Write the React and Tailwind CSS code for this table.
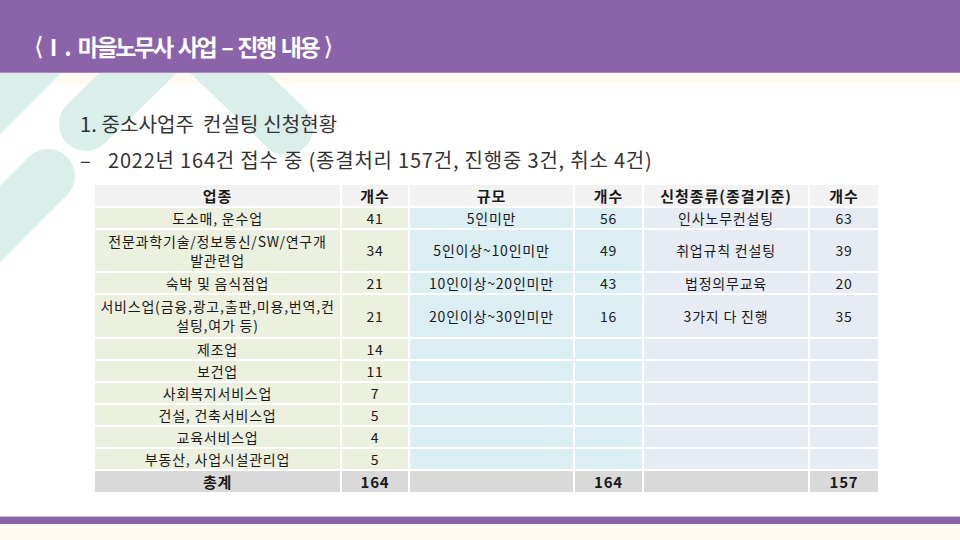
// Slide: 마을노무사 사업 - 진행 내용

const KR = { fontFamily: '"Noto Sans CJK KR", "Noto Sans", sans-serif' };

const rows = [
  { biz: "도소매, 운수업", n1: "41", size: "5인미만", n2: "56", kind: "인사노무컨설팅", n3: "63" },
  { biz: ["전문과학기술/정보통신/SW/연구개", "발관련업"], n1: "34", size: "5인이상~10인미만", n2: "49", kind: "취업규칙 컨설팅", n3: "39" },
  { biz: "숙박 및 음식점업", n1: "21", size: "10인이상~20인미만", n2: "43", kind: "법정의무교육", n3: "20" },
  { biz: ["서비스업(금융,광고,출판,미용,번역,컨", "설팅,여가 등)"], n1: "21", size: "20인이상~30인미만", n2: "16", kind: "3가지 다 진행", n3: "35" },
  { biz: "제조업", n1: "14" },
  { biz: "보건업", n1: "11" },
  { biz: "사회복지서비스업", n1: "7" },
  { biz: "건설, 건축서비스업", n1: "5" },
  { biz: "교육서비스업", n1: "4" },
  { biz: "부동산, 사업시설관리업", n1: "5" },
];

const titleWords = ["마을노무사", "사업", "–", "진행", "내용"];

const Cell = ({ className = "", children }) => (
  <div className={`flex flex-col items-center justify-center text-center whitespace-nowrap leading-[19px] ${className}`}>
    {children}
  </div>
);

const Decoration = () => (
  <svg className="absolute left-0 top-0 pointer-events-none" width="960" height="540">
    <g stroke="#DAEFEA" strokeWidth="54" strokeLinecap="round" fill="none">
      <line x1="66" y1="30" x2="-40" y2="136" />
      <line x1="172" y1="40" x2="86" y2="124" />
      <line x1="195" y1="40" x2="286" y2="128" />
      <line x1="48" y1="176" x2="-60" y2="284" />
    </g>
  </svg>
);

export default function App() {
  return (
    <div className="relative w-[960px] h-[540px] overflow-hidden bg-white flex flex-col" style={KR}>
      <div className="h-[84px] bg-[#FFFBF0]" />
      <Decoration />
      <div className="absolute left-0 top-0 w-full h-[73px] bg-[#8B63A9] border-b border-[#A68BC0] flex items-center pt-[21px] pl-[34px] z-10">
        <h1 className="flex items-center text-white text-[23px] font-bold leading-none">
          <span className="font-['DejaVu_Sans'] font-normal text-[25px] mr-[6px]">⟨</span>
          <span className="mr-[7px]">I</span>
          <span className="mr-[6px]">.</span>
          <span className="flex gap-[6px]">
            {titleWords.map((w) => (
              <span key={w} className="tracking-[-2.4px]">{w}</span>
            ))}
          </span>
          <span className="font-['DejaVu_Sans'] font-normal text-[25px] ml-[5px]">⟩</span>
        </h1>
      </div>

      <div className="relative z-10 flex flex-col">
        <div className="pl-[80px] mt-[26px] text-[20px] text-[#333] leading-[28px] tracking-[0.1px]">
          1. 중소사업주&nbsp; 컨설팅 신청현황
        </div>
        <div className="pl-[80px] mt-[8px] flex text-[20px] text-[#333] leading-[28px] tracking-[0.8px]">
          <span className="w-[28px]">–</span>
          <span>2022년 164건 접수 중 (종결처리 157건, 진행중 3건, 취소 4건)</span>
        </div>

        <div className="ml-[95px] mt-[11px] grid grid-cols-[245px_66px_163px_67px_164px_68px] grid-rows-[21px_20px_41px_20px_42px_20px_20px_20px_20px_20px_20px_21px] gap-[2px] w-[783px] text-[14px] text-[#1a1a1a] tracking-[0.8px]">
          <Cell className="bg-[#F2F2F2] font-bold text-[15px] tracking-[1px]">업종</Cell>
          <Cell className="bg-[#F2F2F2] font-bold text-[15px] tracking-[1px]">개수</Cell>
          <Cell className="bg-[#F2F2F2] font-bold text-[15px] tracking-[1px]">규모</Cell>
          <Cell className="bg-[#F2F2F2] font-bold text-[15px] tracking-[1px]">개수</Cell>
          <Cell className="bg-[#F2F2F2] font-bold text-[15px] tracking-[1px]">신청종류(종결기준)</Cell>
          <Cell className="bg-[#F2F2F2] font-bold text-[15px] tracking-[1px]">개수</Cell>

          {rows.map((r, i) => (
            <div key={i} className="contents">
              <Cell className="bg-[#EBF0DF]">
                {Array.isArray(r.biz) ? r.biz.map((t) => <span key={t}>{t}</span>) : r.biz}
              </Cell>
              <Cell className="bg-[#EBF0DF]">{r.n1}</Cell>
              <Cell className="bg-[#DBEEF3]">{r.size}</Cell>
              <Cell className="bg-[#DBEEF3]">{r.n2}</Cell>
              <Cell className="bg-[#E7ECF4]">{r.kind}</Cell>
              <Cell className="bg-[#E7ECF4]">{r.n3}</Cell>
            </div>
          ))}

          <Cell className="bg-[#D9D9D9] font-bold text-[15px]">총계</Cell>
          <Cell className="bg-[#D9D9D9] font-bold text-[15px]">164</Cell>
          <Cell className="bg-[#D9D9D9]" />
          <Cell className="bg-[#D9D9D9] font-bold text-[15px]">164</Cell>
          <Cell className="bg-[#D9D9D9]" />
          <Cell className="bg-[#D9D9D9] font-bold text-[15px]">157</Cell>
        </div>
      </div>

      <div className="flex-1" />
      <div className="relative z-10 h-[1px] bg-[#C9B8D8]" />
      <div className="relative z-10 h-[7px] bg-[#8B63A9]" />
      <div className="relative z-10 h-[16px] bg-[#FFFAF0]" />
    </div>
  );
}
